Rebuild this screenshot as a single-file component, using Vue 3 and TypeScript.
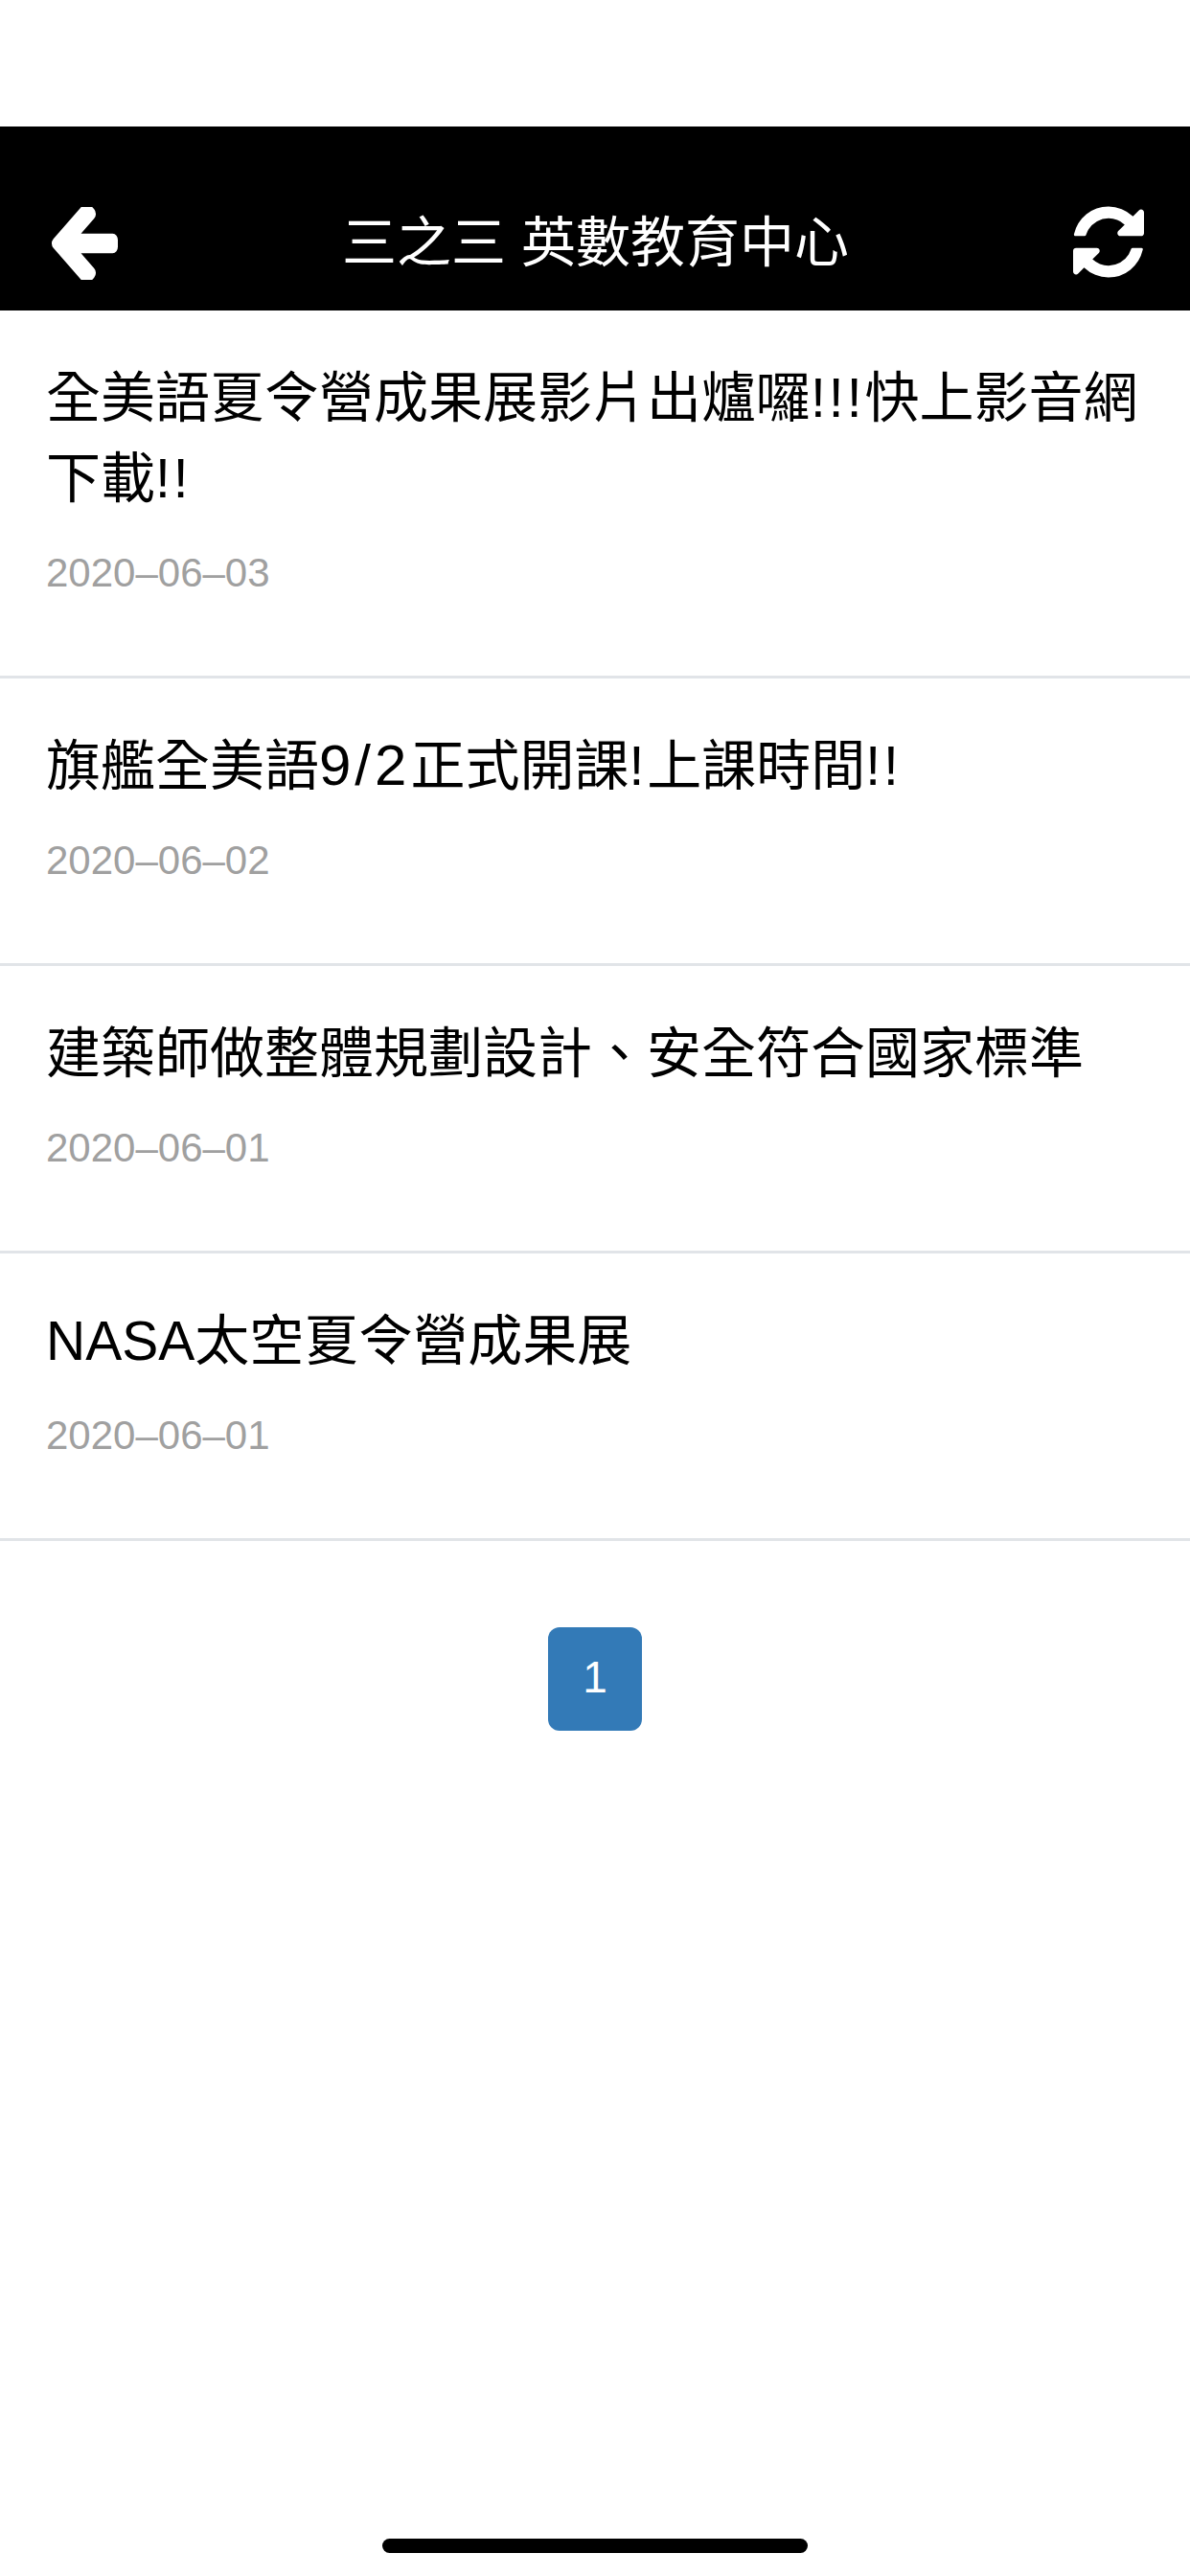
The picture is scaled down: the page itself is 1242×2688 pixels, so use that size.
<template>
  <div class="page">
    <header class="nav">
      <svg class="icon back" viewBox="128 250 1536 1420" preserveAspectRatio="none">
        <path d="M1664 896v128q0 53-32.500 90.500t-84.500 37.500h-704l293 294q38 36 38 90t-38 90l-75 76q-37 37-90 37-52 0-91-37l-651-652q-37-37-37-90 0-52 37-91l651-650q38-38 91-38 52 0 90 38l75 74q38 38 38 91t-38 91l-293 293h704q52 0 84.500 37.500t32.500 90.500z" />
      </svg>
      <h1 class="title">三之三 英數教育中心</h1>
      <svg class="icon refresh" viewBox="128 128 1536 1536">
        <path d="M1639 1056q0 5-1 7-64 268-268 434.500t-478 166.500q-146 0-282.500-55t-243.500-157l-129 129q-19 19-45 19t-45-19-19-45v-448q0-26 19-45t45-19h448q26 0 45 19t19 45-19 45l-137 137q71 66 161 102t187 36q134 0 250-65t186-179q11-17 53-117 8-23 30-23h192q13 0 22.500 9.500t9.500 22.500zm25-800v448q0 26-19 45t-45 19h-448q-26 0-45-19t-19-45 19-45l138-138q-148-137-349-137-134 0-250 65t-186 179q-11 17-53 117-8 23-30 23h-199q-13 0-22.500-9.500t-9.500-22.500v-7q65-268 270-434.500t480-166.500q146 0 284 55.500t245 156.500l130-129q19-19 45-19t45 19 19 45z" />
      </svg>
    </header>

    <ul class="news">
      <li v-for="item in news" :key="item.title" class="news-item">
        <p class="news-title">
          <template v-for="(run, i) in splitRuns(item.title)" :key="i">
            <br v-if="run.text === '\n'" />
            <span v-else :class="run.cls">{{ run.text }}</span>
          </template>
        </p>
        <p class="news-date">{{ item.date }}</p>
      </li>
    </ul>

    <div class="pager">
      <span class="page-num">1</span>
    </div>

    <div class="home-bar"></div>
  </div>
</template>

<script setup lang="ts">
interface NewsItem {
  title: string
  date: string
}

const news: NewsItem[] = [
  { title: '全美語夏令營成果展影片出爐囉!!!快上影音網\n下載!!', date: '2020–06–03' },
  { title: '旗艦全美語9/2正式開課!上課時間!!', date: '2020–06–02' },
  { title: '建築師做整體規劃設計、安全符合國家標準', date: '2020–06–01' },
  { title: 'NASA太空夏令營成果展', date: '2020–06–01' },
]

// digits and ! run wider than Liberation's in the original font
function splitRuns(title: string) {
  return title
    .split(/([0-9/]+|!+|\n)/)
    .filter(Boolean)
    .map((text) => ({
      text,
      cls: text[0] === '!' ? 'bang' : /^[0-9]/.test(text) ? 'digits' : '',
    }))
}
</script>

<style>
html,
body {
  background: #fff;
}
</style>

<style scoped>
.page {
  position: relative;
  min-height: 2688px;
  padding-top: 132px;
  box-sizing: border-box;
  font-family: "Liberation Sans", "Noto Sans CJK TC", sans-serif;
  overflow: hidden;
}

.nav {
  display: flex;
  align-items: center;
  justify-content: space-between;
  height: 192px;
  padding: 48px 48px 0 51px;
  box-sizing: border-box;
  background: #000;
  color: #fff;
}

.icon {
  display: block;
  fill: #fff;
}

.back {
  width: 72px;
  height: 76px;
  margin-top: 4px;
}

.refresh {
  width: 74px;
  height: 75px;
}

.title {
  margin: 2px 0 0;
  font-size: 57px;
  font-weight: 400;
  line-height: 60px;
}

.news {
  margin: 0;
  padding: 0;
  list-style: none;
}

.news-item {
  padding: 49px 48px 80px;
  border-bottom: 3px solid #e1e4e8;
}

.news-title {
  margin: 0;
  font-size: 57px;
  line-height: 84px;
  color: #000;
}

.bang {
  letter-spacing: 3px;
}

.digits {
  font-size: 60px;
  letter-spacing: 4px;
}

.news-date {
  margin: 30px 0 0;
  font-size: 42px;
  line-height: 54px;
  color: #a0a0a0;
}

.pager {
  display: flex;
  justify-content: center;
  margin-top: 90px;
}

.page-num {
  display: flex;
  align-items: center;
  justify-content: center;
  width: 98px;
  height: 108px;
  padding-bottom: 4px;
  box-sizing: border-box;
  border-radius: 12px;
  background: #337ab7;
  color: #fff;
  font-size: 46px;
}

.home-bar {
  position: absolute;
  left: 399px;
  top: 2649px;
  width: 444px;
  height: 15px;
  border-radius: 8px;
  background: #000;
}
</style>
